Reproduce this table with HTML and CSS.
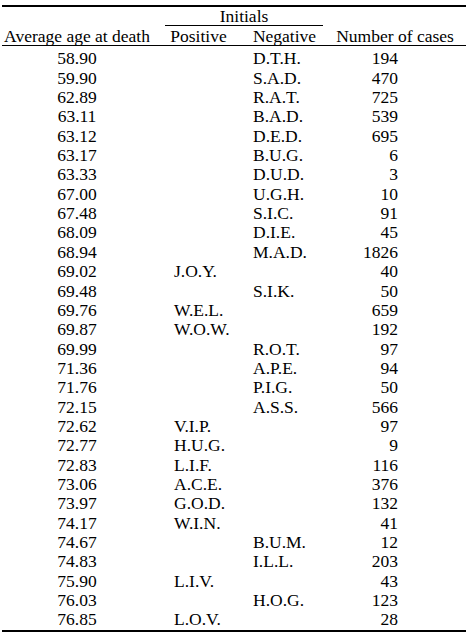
FILE: index.html
```html
<!DOCTYPE html>
<html>
<head>
<meta charset="utf-8">
<link rel="stylesheet" href="styles.css">
</head>
<body>
<table class="stats">
  <colgroup>
    <col class="c-age">
    <col class="c-pos">
    <col class="c-neg">
    <col class="c-num">
  </colgroup>
  <thead>
    <tr class="group-row">
      <th></th>
      <th colspan="2" class="group"><div class="group-label">Initials</div></th>
      <th></th>
    </tr>
    <tr class="head-row">
      <th class="h-age">Average age at death</th>
      <th class="h-pos">Positive</th>
      <th class="h-neg">Negative</th>
      <th class="h-num">Number of cases</th>
    </tr>
  </thead>
  <tbody>
    <tr><td class="age">58.90</td><td class="pos"></td><td class="neg">D.T.H.</td><td class="num">194</td></tr>
    <tr><td class="age">59.90</td><td class="pos"></td><td class="neg">S.A.D.</td><td class="num">470</td></tr>
    <tr><td class="age">62.89</td><td class="pos"></td><td class="neg">R.A.T.</td><td class="num">725</td></tr>
    <tr><td class="age">63.11</td><td class="pos"></td><td class="neg">B.A.D.</td><td class="num">539</td></tr>
    <tr><td class="age">63.12</td><td class="pos"></td><td class="neg">D.E.D.</td><td class="num">695</td></tr>
    <tr><td class="age">63.17</td><td class="pos"></td><td class="neg">B.U.G.</td><td class="num">6</td></tr>
    <tr><td class="age">63.33</td><td class="pos"></td><td class="neg">D.U.D.</td><td class="num">3</td></tr>
    <tr><td class="age">67.00</td><td class="pos"></td><td class="neg">U.G.H.</td><td class="num">10</td></tr>
    <tr><td class="age">67.48</td><td class="pos"></td><td class="neg">S.I.C.</td><td class="num">91</td></tr>
    <tr><td class="age">68.09</td><td class="pos"></td><td class="neg">D.I.E.</td><td class="num">45</td></tr>
    <tr><td class="age">68.94</td><td class="pos"></td><td class="neg">M.A.D.</td><td class="num">1826</td></tr>
    <tr><td class="age">69.02</td><td class="pos">J.O.Y.</td><td class="neg"></td><td class="num">40</td></tr>
    <tr><td class="age">69.48</td><td class="pos"></td><td class="neg">S.I.K.</td><td class="num">50</td></tr>
    <tr><td class="age">69.76</td><td class="pos">W.E.L.</td><td class="neg"></td><td class="num">659</td></tr>
    <tr><td class="age">69.87</td><td class="pos">W.O.W.</td><td class="neg"></td><td class="num">192</td></tr>
    <tr><td class="age">69.99</td><td class="pos"></td><td class="neg">R.O.T.</td><td class="num">97</td></tr>
    <tr><td class="age">71.36</td><td class="pos"></td><td class="neg">A.P.E.</td><td class="num">94</td></tr>
    <tr><td class="age">71.76</td><td class="pos"></td><td class="neg">P.I.G.</td><td class="num">50</td></tr>
    <tr><td class="age">72.15</td><td class="pos"></td><td class="neg">A.S.S.</td><td class="num">566</td></tr>
    <tr><td class="age">72.62</td><td class="pos">V.I.P.</td><td class="neg"></td><td class="num">97</td></tr>
    <tr><td class="age">72.77</td><td class="pos">H.U.G.</td><td class="neg"></td><td class="num">9</td></tr>
    <tr><td class="age">72.83</td><td class="pos">L.I.F.</td><td class="neg"></td><td class="num">116</td></tr>
    <tr><td class="age">73.06</td><td class="pos">A.C.E.</td><td class="neg"></td><td class="num">376</td></tr>
    <tr><td class="age">73.97</td><td class="pos">G.O.D.</td><td class="neg"></td><td class="num">132</td></tr>
    <tr><td class="age">74.17</td><td class="pos">W.I.N.</td><td class="neg"></td><td class="num">41</td></tr>
    <tr><td class="age">74.67</td><td class="pos"></td><td class="neg">B.U.M.</td><td class="num">12</td></tr>
    <tr><td class="age">74.83</td><td class="pos"></td><td class="neg">I.L.L.</td><td class="num">203</td></tr>
    <tr><td class="age">75.90</td><td class="pos">L.I.V.</td><td class="neg"></td><td class="num">43</td></tr>
    <tr><td class="age">76.03</td><td class="pos"></td><td class="neg">H.O.G.</td><td class="num">123</td></tr>
    <tr><td class="age">76.85</td><td class="pos">L.O.V.</td><td class="neg"></td><td class="num">28</td></tr>
  </tbody>
</table>
</body>
</html>
```

FILE: styles.css
```css
html, body {
  margin: 0;
  padding: 0;
  background: #ffffff;
}

body {
  color: #000000;
  font-family: "Liberation Serif", "Times New Roman", serif;
  font-size: 17.5px;
}

.stats {
  margin: 5px 0 0 2px;
  width: 464px;
  border-collapse: collapse;
  table-layout: fixed;
  border-top: 2px solid #000;
  border-bottom: 2px solid #000;
}

.c-age { width: 150px; }
.c-pos { width: 93px; }
.c-neg { width: 79px; }
.c-num { width: 142px; }

.stats th,
.stats td {
  padding: 0;
  font-weight: normal;
  white-space: nowrap;
}

.group-row th {
  line-height: 18px;
  padding-bottom: 1px;
}

.group {
  text-align: center;
}

.group-label {
  margin: 0 1px 0 13px;
  border-bottom: 1px solid #000;
  text-align: center;
}

.head-row th {
  line-height: 18px;
  border-bottom: 1px solid #000;
}

.h-age, .h-pos, .h-neg { text-align: center; }
.h-pos { padding-left: 0; padding-right: 2px; }
.h-num { text-align: center; padding-left: 10px; }

.stats tbody td {
  line-height: 19.34px;
  height: 19.34px;
}

.stats tbody tr:first-child td {
  padding-top: 3.4px;
}

.age { text-align: center; }
.pos { text-align: left; padding-left: 22px !important; }
.neg { text-align: left; padding-left: 8px !important; }
.num { text-align: right; padding-right: 68px !important; }
```
